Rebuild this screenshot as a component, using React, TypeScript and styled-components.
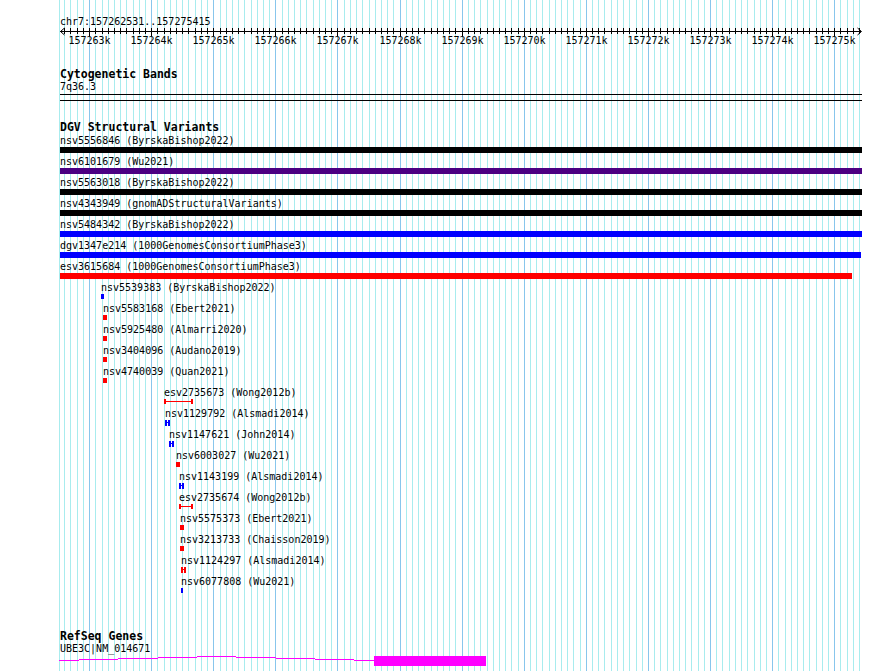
import React from 'react'
import styled, { createGlobalStyle } from 'styled-components'

const START = 157262531
const END = 157275415
const LEFT = 60
const WIDTH = 800
const toX = (bp: number) => LEFT + ((bp - START) * WIDTH) / (END - START)

const ticks: { x: number; major: boolean; bp: number }[] = []
for (let bp = 157262600; bp <= 157275400; bp += 100) {
  ticks.push({ x: Math.round(toX(bp)) + 0.5, major: bp % 1000 === 0, bp })
}

type Glyph = 'bar' | 'hbeam' | 'ibeam'

const bigVariants = [
  { name: 'nsv5556846 (ByrskaBishop2022)', color: '#000000', width: 802 },
  { name: 'nsv6101679 (Wu2021)', color: '#4b0082', width: 802 },
  { name: 'nsv5563018 (ByrskaBishop2022)', color: '#000000', width: 802 },
  { name: 'nsv4343949 (gnomADStructuralVariants)', color: '#000000', width: 802 },
  { name: 'nsv5484342 (ByrskaBishop2022)', color: '#0000ff', width: 802 },
  { name: 'dgv1347e214 (1000GenomesConsortiumPhase3)', color: '#0000ff', width: 801 },
  { name: 'esv3615684 (1000GenomesConsortiumPhase3)', color: '#ff0000', width: 792 },
]

const smallVariants: { name: string; left: number; width: number; color: string; glyph: Glyph }[] = [
  { name: 'nsv5539383 (ByrskaBishop2022)', left: 101, width: 3, color: '#0000ff', glyph: 'bar' },
  { name: 'nsv5583168 (Ebert2021)', left: 103, width: 4, color: '#ff0000', glyph: 'bar' },
  { name: 'nsv5925480 (Almarri2020)', left: 103, width: 4, color: '#ff0000', glyph: 'bar' },
  { name: 'nsv3404096 (Audano2019)', left: 103, width: 4, color: '#ff0000', glyph: 'bar' },
  { name: 'nsv4740039 (Quan2021)', left: 103, width: 4, color: '#ff0000', glyph: 'bar' },
  { name: 'esv2735673 (Wong2012b)', left: 164, width: 29, color: '#ff0000', glyph: 'ibeam' },
  { name: 'nsv1129792 (Alsmadi2014)', left: 165, width: 5, color: '#0000ff', glyph: 'hbeam' },
  { name: 'nsv1147621 (John2014)', left: 169, width: 5, color: '#0000ff', glyph: 'hbeam' },
  { name: 'nsv6003027 (Wu2021)', left: 176, width: 4, color: '#ff0000', glyph: 'bar' },
  { name: 'nsv1143199 (Alsmadi2014)', left: 179, width: 5, color: '#0000ff', glyph: 'hbeam' },
  { name: 'esv2735674 (Wong2012b)', left: 179, width: 14, color: '#ff0000', glyph: 'ibeam' },
  { name: 'nsv5575373 (Ebert2021)', left: 180, width: 4, color: '#ff0000', glyph: 'bar' },
  { name: 'nsv3213733 (Chaisson2019)', left: 180, width: 4, color: '#ff0000', glyph: 'bar' },
  { name: 'nsv1124297 (Alsmadi2014)', left: 181, width: 5, color: '#ff0000', glyph: 'hbeam' },
  { name: 'nsv6077808 (Wu2021)', left: 181, width: 2, color: '#0000ff', glyph: 'bar' },
]

// intron hat drawn pixel by pixel like the original renderer
const intronSteps = [
  [59, 79, 5],
  [79, 118, 4],
  [118, 158, 3],
  [158, 197, 2],
  [197, 236, 1],
  [236, 276, 2],
  [276, 315, 3],
  [315, 354, 4],
  [354, 374, 5],
]

const GlobalStyle = createGlobalStyle`
  html, body {
    margin: 0;
    padding: 0;
    background: #ffffff;
  }
  body {
    font-family: "DejaVu Sans Mono", "Liberation Mono", monospace;
    color: #000000;
  }
`

const Page = styled.div`
  position: relative;
  width: 890px;
  height: 671px;
  overflow: hidden;
  box-sizing: border-box;
  padding-top: 16px;
`

const Grid = styled.svg`
  position: absolute;
  top: 0;
  left: 0;
  z-index: 0;
  pointer-events: none;
`

const Content = styled.div`
  position: relative;
  z-index: 1;
  display: flex;
  flex-direction: column;
`

const Location = styled.div`
  padding-left: 60px;
  font-size: 10px;
  line-height: 12px;
  height: 10px;
  white-space: nowrap;
`

const RulerSvg = styled.svg`
  display: block;
  font-family: "DejaVu Sans Mono", "Liberation Mono", monospace;
  font-size: 10px;
`

const TrackTitle = styled.div<{ $gap: number }>`
  margin-top: ${p => p.$gap}px;
  padding-left: 60px;
  font-size: 11.5px;
  font-weight: bold;
  line-height: 13px;
  height: 13px;
  white-space: nowrap;
`

const PlainLabel = styled.div`
  padding-left: 60px;
  font-size: 10px;
  line-height: 12px;
  height: 12px;
  white-space: nowrap;
`

const Rule = styled.div<{ $gap: number }>`
  margin-top: ${p => p.$gap}px;
  margin-left: 60px;
  width: 802px;
  height: 1px;
  background: #000000;
`

const Rows = styled.div`
  margin-top: 1px;
  display: flex;
  flex-direction: column;
`

const FeatureRow = styled.div<{ $left: number }>`
  height: 21px;
  padding-left: ${p => p.$left}px;
  display: flex;
  flex-direction: column;
  align-items: flex-start;
`

const FeatureLabel = styled.div`
  font-size: 10px;
  line-height: 12px;
  height: 12px;
  white-space: nowrap;
`

const Bar = styled.div<{ $width: number; $height: number; $color: string }>`
  width: ${p => p.$width}px;
  height: ${p => p.$height}px;
  background: ${p => p.$color};
`

const GlyphSvg = styled.svg`
  display: block;
`

const GeneSvg = styled.svg`
  display: block;
`

const Ruler = () => (
  <RulerSvg width={870} height={22}>
    <rect x={60} y={5} width={801} height={1} fill="#000" />
    <polyline points="64.5,2 60.5,5.5 64.5,9" fill="none" stroke="#000" strokeWidth={1} />
    <polyline points="857.5,2 861.5,5.5 857.5,9" fill="none" stroke="#000" strokeWidth={1} />
    {ticks.map(t => (
      <line key={t.bp} x1={t.x} x2={t.x} y1={2} y2={t.major ? 10 : 8} stroke="#000" strokeWidth={1} />
    ))}
    {ticks
      .filter(t => t.major)
      .map(t => (
        <text key={t.bp} x={t.x} y={18} textAnchor="middle" fill="#000">
          {t.bp / 1000}k
        </text>
      ))}
  </RulerSvg>
)

const SmallGlyph = ({ glyph, width, color }: { glyph: Glyph; width: number; color: string }) => {
  if (glyph === 'bar') return <Bar $width={width} $height={5} $color={color} />
  if (glyph === 'hbeam') {
    return (
      <GlyphSvg width={width} height={6} shapeRendering="crispEdges">
        <rect x={0} y={0} width={2} height={6} fill={color} />
        <rect x={width - 2} y={0} width={2} height={6} fill={color} />
        <rect x={0} y={2} width={width} height={1} fill={color} />
      </GlyphSvg>
    )
  }
  return (
    <GlyphSvg width={width} height={6} shapeRendering="crispEdges">
      <rect x={0} y={0} width={2} height={5} fill={color} />
      <rect x={width - 2} y={0} width={2} height={5} fill={color} />
      <rect x={0} y={2} width={width} height={1} fill={color} />
    </GlyphSvg>
  )
}

export default function App() {
  return (
    <Page>
      <GlobalStyle />
      <Grid width={890} height={671} shapeRendering="crispEdges">
        <line x1={59.5} x2={59.5} y1={0} y2={671} stroke="#a8ecee" />
        {ticks.map(t => (
          <line key={t.bp} x1={t.x} x2={t.x} y1={0} y2={671} stroke={t.major ? '#88c6ec' : '#a8ecee'} />
        ))}
      </Grid>
      <Content>
        <Location>chr7:157262531..157275415</Location>
        <Ruler />

        <TrackTitle $gap={20}>Cytogenetic Bands</TrackTitle>
        <PlainLabel>7q36.3</PlainLabel>
        <Rule $gap={1} />
        <Rule $gap={5} />

        <TrackTitle $gap={20}>DGV Structural Variants</TrackTitle>
        <Rows>
          {bigVariants.map(v => (
            <FeatureRow key={v.name} $left={60}>
              <FeatureLabel>{v.name}</FeatureLabel>
              <Bar $width={v.width} $height={6} $color={v.color} />
            </FeatureRow>
          ))}
          {smallVariants.map(v => (
            <FeatureRow key={v.name} $left={v.left}>
              <FeatureLabel>{v.name}</FeatureLabel>
              <SmallGlyph glyph={v.glyph} width={v.width} color={v.color} />
            </FeatureRow>
          ))}
        </Rows>

        <TrackTitle $gap={33}>RefSeq Genes</TrackTitle>
        <PlainLabel>UBE3C|NM_014671</PlainLabel>
        <GeneSvg width={890} height={12} shapeRendering="crispEdges">
          {intronSteps.map(([x1, x2, y]) => (
            <rect key={x1} x={x1} y={y} width={x2 - x1} height={1} fill="#ff00ff" />
          ))}
          <rect x={374} y={1} width={112} height={10} fill="#ff00ff" />
        </GeneSvg>
      </Content>
    </Page>
  )
}
